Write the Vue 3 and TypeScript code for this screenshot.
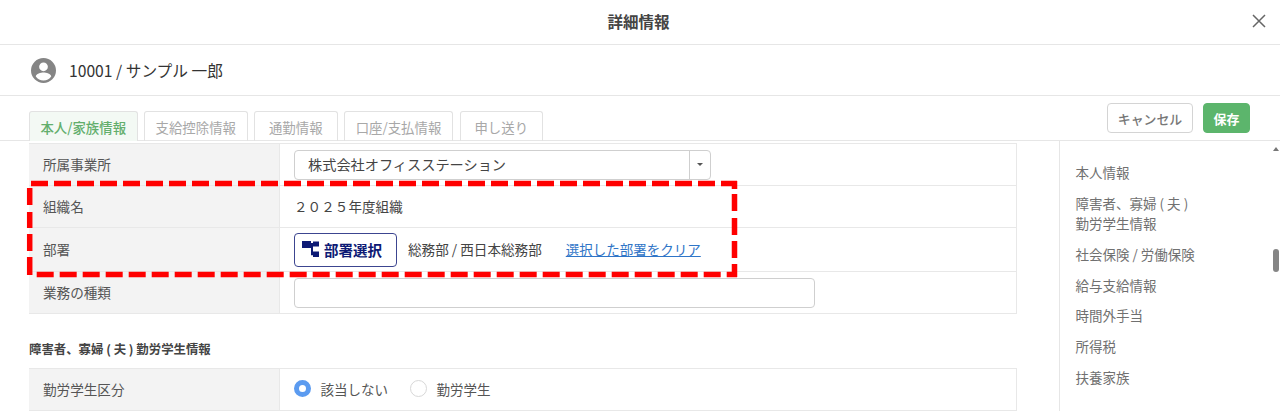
<script setup lang="ts">
interface Row {
  label: string
}

const tabs = ['本人/家族情報', '支給控除情報', '通勤情報', '口座/支払情報', '申し送り']
const navItems = ['本人情報', '障害者、寡婦 ( 夫 )\n勤労学生情報', '社会保険 / 労働保険', '給与支給情報', '時間外手当', '所得税', '扶養家族']
const studentRow: Row = { label: '勤労学生区分' }
</script>

<template>
  <div class="page">
    <header class="title-bar">
      <h1 class="title">詳細情報</h1>
      <svg class="close" width="16" height="16" viewBox="0 0 16 16">
        <path d="M2 2L14 14M14 2L2 14" stroke="#666" stroke-width="1.5" fill="none" />
      </svg>
    </header>

    <div class="user-bar">
      <svg class="avatar" width="25" height="25" viewBox="0 0 24 24">
        <path fill="#858585" d="M12 0a12 12 0 1 0 0 24a12 12 0 0 0 0-24zm0 4.200a4.200 4.200 0 1 1 0 8.400a4.200 4.200 0 0 1 0-8.400zm0 17.400a9 9 0 0 1-7.400-3.900c.1-2.400 4.900-3.700 7.400-3.700s7.300 1.300 7.400 3.700a9 9 0 0 1-7.400 3.900z" />
      </svg>
      <span>10001 / サンプル 一郎</span>
    </div>

    <div class="tab-bar">
      <div class="tabs">
        <div v-for="(tab, i) in tabs" :key="tab" class="tab" :class="{ active: i === 0 }">{{ tab }}</div>
      </div>
      <div class="actions">
        <button class="btn btn-cancel">キャンセル</button>
        <button class="btn btn-save">保存</button>
      </div>
    </div>

    <div class="content">
      <main class="main">
        <div class="table">
          <div class="row row-first">
            <div class="label">所属事業所</div>
            <div class="value">
              <div class="select">
                <span class="select-text">株式会社オフィスステーション</span>
                <span class="select-arrow"></span>
              </div>
            </div>
          </div>
          <div class="row row-org">
            <div class="label">組織名</div>
            <div class="value org">２０２５年度組織</div>
          </div>
          <div class="row row-dept">
            <div class="label">部署</div>
            <div class="value">
              <button class="dept-btn">
                <svg class="dept-icon" width="18" height="17" viewBox="0 0 18 17">
                  <path fill="#0d1a75" d="M0 0h9v7H0zM11 0.500h6v5h-6zM11 10.500h6v5.500h-6z" />
                  <path fill="none" stroke="#0d1a75" stroke-width="2" d="M9 3h2M10 3v10.200h1" />
                </svg>
                <span>部署選択</span>
              </button>
              <span class="dept-name">総務部 / 西日本総務部</span>
              <a class="clear-link">選択した部署をクリア</a>
            </div>
          </div>
          <div class="row row-work">
            <div class="label">業務の種類</div>
            <div class="value"><div class="text-input"></div></div>
          </div>
        </div>

        <h2 class="section-title">障害者、寡婦 ( 夫 ) 勤労学生情報</h2>

        <div class="table">
          <div class="row row-student">
            <div class="label">{{ studentRow.label }}</div>
            <div class="value radios">
              <span class="radio checked"></span>
              <span class="radio-label">該当しない</span>
              <span class="radio"></span>
              <span class="radio-label">勤労学生</span>
            </div>
          </div>
        </div>
      </main>

      <nav class="side-nav">
        <div v-for="item in navItems" :key="item" class="nav-item">{{ item }}</div>
      </nav>

      <div class="scrollbar">
        <span class="scroll-up"></span>
        <span class="scroll-thumb"></span>
      </div>
    </div>

    <svg class="highlight" width="720" height="104" viewBox="26 178 720 104">
      <g fill="none" stroke="#ff0000" stroke-width="5.500">
        <path d="M31 183.500H737" stroke-dasharray="17 6" />
        <path d="M36.700 274.500H737" stroke-dasharray="17 6" />
        <path d="M29.700 188V205M29.700 212V228M29.700 234V251M29.700 257V275" />
        <path d="M734.500 181V189M734.500 194V211M734.500 218V235M734.500 241V258M734.500 264V277" />
      </g>
    </svg>
  </div>
</template>

<style>
html,
body {
  margin: 0;
  background: #fff;
}
</style>

<style scoped>
.page {
  position: relative;
  width: 1280px;
  height: 411px;
  overflow: hidden;
  background: #fff;
  color: #333;
  font-family: "Noto Sans CJK JP", "Noto Sans", sans-serif;
  font-size: 13.500px;
}

.title-bar {
  display: flex;
  align-items: center;
  justify-content: center;
  height: 44px;
  border-bottom: 1px solid #e6e6e6;
  position: relative;
}

.title {
  margin: 0 3px 2px 0;
  font-size: 15.500px;
  font-weight: 700;
  color: #444;
}

.close {
  position: absolute;
  right: 13px;
  top: 13px;
}

.user-bar {
  display: flex;
  align-items: center;
  gap: 13px;
  height: 50px;
  padding-left: 31px;
  border-bottom: 1px solid #e6e6e6;
  font-size: 15.700px;
  color: #333;
}

.tab-bar {
  display: flex;
  justify-content: space-between;
  height: 45px;
  padding-left: 29px;
  border-bottom: 1px solid #e6e6e6;
  box-sizing: border-box;
}

.tabs {
  display: flex;
  gap: 6.500px;
  padding-top: 15px;
}

.tab {
  display: flex;
  align-items: center;
  justify-content: center;
  box-sizing: border-box;
  height: 30px;
  padding: 0 10px;
  border: 1px solid #e2e2e2;
  border-bottom: none;
  border-radius: 3px 3px 0 0;
  color: #a8a8a8;
  font-size: 13.400px;
}

.tab:nth-child(1) {
  width: 108.500px;
}

.tab:nth-child(2) {
  width: 103.500px;
}

.tab:nth-child(3) {
  width: 83.500px;
}

.tab:nth-child(4) {
  width: 109px;
}

.tab:nth-child(5) {
  width: 83.500px;
}

.tab.active {
  background: #f3f9f4;
  color: #62ae6c;
  font-weight: 500;
}

.actions {
  display: flex;
  gap: 10px;
  padding: 7px 30px 0 0;
}

.btn {
  height: 30px;
  border-radius: 4px;
  font-family: inherit;
  font-size: 12.900px;
  font-weight: 500;
  padding: 0;
}

.btn-cancel {
  width: 86px;
  background: #fff;
  border: 1px solid #d4d4d4;
  color: #777;
}

.btn-save {
  width: 47px;
  background: #5cb56c;
  border: 1px solid #5cb56c;
  color: #fff;
  font-weight: 700;
}

.content {
  display: flex;
  height: 270px;
}

.main {
  width: 1060px;
  box-sizing: border-box;
  padding: 2px 42px 0 29px;
  border-right: 1px solid #e6e6e6;
  flex-shrink: 0;
}

.table {
  border: 1px solid #e8e8e8;
  border-left: none;
  border-bottom: none;
}

.row {
  display: flex;
  border-bottom: 1px solid #e8e8e8;
}

.row-first {
  height: 41px;
}

.row-org {
  height: 41px;
}

.row-dept {
  height: 43px;
}

.row-work {
  height: 41px;
}

.row-student {
  height: 41px;
}

.label {
  display: flex;
  align-items: center;
  box-sizing: border-box;
  width: 251px;
  flex-shrink: 0;
  padding: 0 0 2px 14px;
  background: #f3f3f3;
  border-right: 1px solid #e8e8e8;
  color: #555;
  font-size: 13.600px;
}

.value {
  display: flex;
  align-items: center;
  flex: 1;
  padding-left: 14px;
  font-size: 13.500px;
  color: #444;
}

.select {
  display: flex;
  align-items: center;
  width: 415px;
  height: 28px;
  border: 1px solid #cfcfcf;
  border-radius: 4px;
}

.select-text {
  flex: 1;
  padding: 0 0 2px 13px;
  font-size: 14.200px;
  color: #444;
}

.select-arrow {
  display: flex;
  align-items: center;
  justify-content: center;
  width: 20px;
  height: 100%;
  border-left: 1px solid #cfcfcf;
}

.select-arrow::before {
  content: "";
  border-left: 3px solid transparent;
  border-right: 3px solid transparent;
  border-top: 3px solid #555;
}

.org {
  padding-bottom: 2px;
  letter-spacing: 0.100px;
}

.dept-btn {
  display: flex;
  align-items: center;
  gap: 4px;
  width: 103px;
  height: 34px;
  box-sizing: border-box;
  padding: 0 0 1px 7px;
  background: #fff;
  border: 1px solid #3c4590;
  border-radius: 4px;
  color: #0d1a75;
  font-family: inherit;
  font-size: 14.500px;
  font-weight: 700;
  white-space: nowrap;
}

.dept-icon {
  flex-shrink: 0;
}

.dept-name {
  margin-left: 11px;
  padding-bottom: 2px;
  font-size: 13.600px;
  color: #444;
}

.clear-link {
  margin-left: 24px;
  margin-bottom: 2px;
  color: #2f75c7;
  font-size: 13.500px;
  text-decoration: underline;
}

.text-input {
  width: 519px;
  height: 28px;
  border: 1px solid #cfcfcf;
  border-radius: 4px;
}

.section-title {
  margin: 0;
  padding: 27px 0 10px;
  font-size: 12.400px;
  line-height: 17px;
  font-weight: 700;
  color: #444;
}

.radios {
  padding-bottom: 2px;
}

.radio {
  box-sizing: border-box;
  width: 17px;
  height: 17px;
  border: 1px solid #d8d8d8;
  border-radius: 50%;
  flex-shrink: 0;
}

.radio.checked {
  border: 5.500px solid #5b9bf0;
  background: #fff;
}

.radio-label {
  margin: 0 22px 0 9.500px;
  font-size: 13.500px;
  color: #555;
}

.side-nav {
  flex: 1;
  padding: 21px 0 0 15.500px;
}

.nav-item {
  margin-bottom: 10.850px;
  font-size: 13.500px;
  line-height: 20px;
  color: #707070;
  white-space: pre-line;
}

.scrollbar {
  position: relative;
  width: 8px;
  flex-shrink: 0;
}

.scroll-up {
  position: absolute;
  top: 6px;
  left: 1px;
  border-left: 3px solid transparent;
  border-right: 3px solid transparent;
  border-bottom: 4px solid #777;
}

.scroll-thumb {
  position: absolute;
  top: 108px;
  left: 1px;
  width: 6px;
  height: 23px;
  border-radius: 3px;
  background: #858585;
}

.highlight {
  position: absolute;
  left: 26px;
  top: 178px;
}
</style>
